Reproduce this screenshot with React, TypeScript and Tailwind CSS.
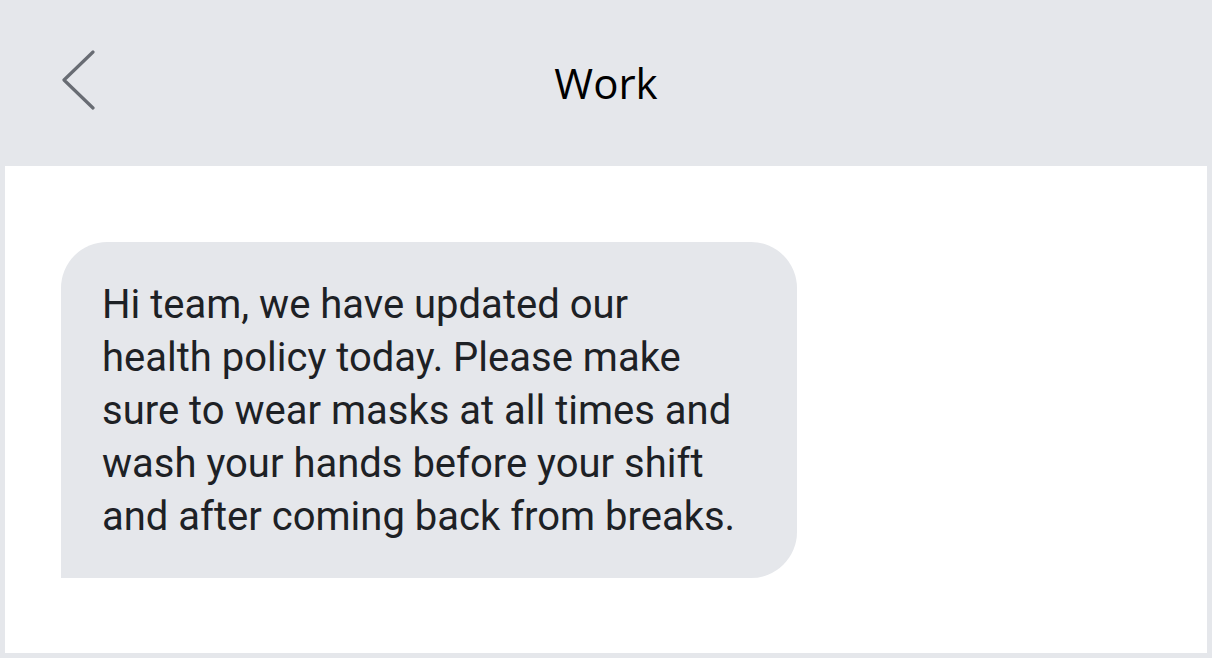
const LINES = [
  "Hi team, we have updated our",
  "health policy today. Please make",
  "sure to wear masks at all times and",
  "wash your hands before your shift",
  "and after coming back from breaks.",
];

function BackIcon() {
  return (
    <svg width="40" height="64" viewBox="0 0 40 64" fill="none" aria-hidden="true">
      <polyline
        points="31,6 2,34 31,62"
        stroke="#686c73"
        strokeWidth="3.2"
        strokeLinecap="round"
        strokeLinejoin="round"
      />
    </svg>
  );
}

export default function App() {
  return (
    <div className="w-[1212px] h-[658px] bg-[#e5e7eb] flex flex-col px-[5px] pb-[5px] font-['Roboto',sans-serif]">
      <header className="h-[166px] shrink-0 flex items-center relative">
        <div className="absolute left-[57px] top-[46px]">
          <BackIcon />
        </div>
        <h1 className="w-full text-center text-[42px] text-black font-['Open_Sans',sans-serif] pb-[2px]">
          Work
        </h1>
      </header>

      <main className="flex-1 bg-white pt-[76px] pl-[56px]">
        <div className="w-[736px] bg-[#e5e7eb] rounded-[46px] rounded-bl-none pl-[41px] pt-[36px] pb-[35px]">
          {LINES.map((line) => (
            <p key={line} className="text-[40px] leading-[53px] text-[#1d2125] whitespace-nowrap">
              {line}
            </p>
          ))}
        </div>
      </main>
    </div>
  );
}
